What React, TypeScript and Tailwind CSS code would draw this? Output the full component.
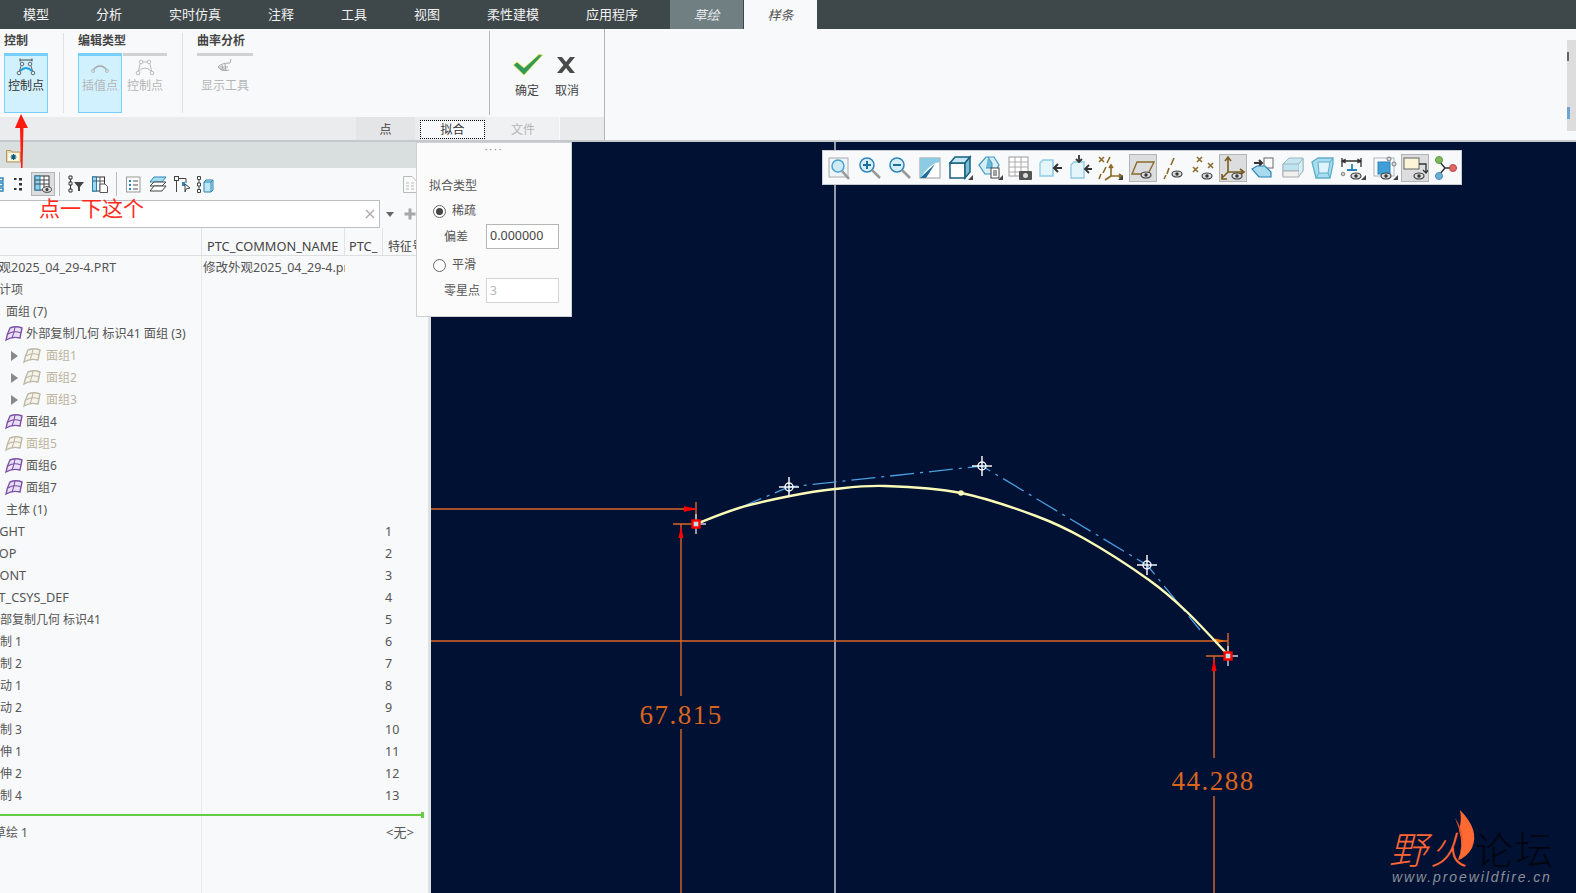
import React from "react";

const Eye = ({ x = 14, y = 19 }: { x?: number; y?: number }) => (
  <g>
    <ellipse cx={x} cy={y} rx={5} ry={3} fill="#d8d8d8" stroke="#444" strokeWidth={1.2} />
    <circle cx={x} cy={y} r={1.7} fill="#333" />
  </g>
);
const Corner = () => <path d="M27 26 L27 21 L22 26Z" fill="#444" />;
const T = ({ children }: { children: React.ReactNode }) => (
  <div className="w-[30px] h-[28px] flex items-center justify-center shrink-0">
    <svg width="28" height="28" viewBox="0 0 28 28" fill="none">{children}</svg>
  </div>
);

const Quilt = ({ faded }: { faded?: boolean }) => {
  const c = faded ? "#bdb8a6" : "#7d4fa8";
  return (
    <svg width="18" height="16" viewBox="0 0 18 16" fill="none" className="shrink-0">
      <path d="M5 2 Q11 -0.5 17 2 L15 12 Q7 10 1 14 Q2 8 5 2 Z" fill={faded ? "#f6f3e8" : "#e8e0f4"} stroke={c} strokeWidth="1.400" />
      <path d="M10 1 Q9 7 7 12 M3 8 Q9 4 16 7" stroke={c} strokeWidth="1.100" />
    </svg>
  );
};

const Arrow = () => <span className="w-0 h-0 border-y-[5px] border-y-transparent border-l-[7px] border-l-[#8a8a8a] shrink-0" />;

type Row = { text: string; off: string; num?: string; col2?: string; icon?: "q" | "f"; arrow?: boolean; faded?: boolean };
const rows: Row[] = [
  { text: "修改外观2025_04_29-4.PRT", off: "ml-[-39px] text-[12.5px]", col2: "修改外观2025_04_29-4.prt" },
  { text: "设计项", off: "ml-[-13px]" },
  { text: "面组 (7)", off: "ml-[6px]" },
  { text: "外部复制几何 标识41 面组 (3)", off: "ml-[5px] gap-[3px] text-[12.2px]", icon: "q" },
  { text: "面组1", off: "ml-[11px] gap-[5px]", icon: "f", arrow: true, faded: true },
  { text: "面组2", off: "ml-[11px] gap-[5px]", icon: "f", arrow: true, faded: true },
  { text: "面组3", off: "ml-[11px] gap-[5px]", icon: "f", arrow: true, faded: true },
  { text: "面组4", off: "ml-[5px] gap-[3px]", icon: "q" },
  { text: "面组5", off: "ml-[5px] gap-[3px]", icon: "f", faded: true },
  { text: "面组6", off: "ml-[5px] gap-[3px]", icon: "q" },
  { text: "面组7", off: "ml-[5px] gap-[3px]", icon: "q" },
  { text: "主体 (1)", off: "ml-[6px]" },
  { text: "RIGHT", off: "ml-[-13px] text-[12.7px]", num: "1" },
  { text: "TOP", off: "ml-[-8px] text-[12.7px]", num: "2" },
  { text: "FRONT", off: "ml-[-15px] text-[12.7px]", num: "3" },
  { text: "PRT_CSYS_DEF", off: "ml-[-17px] text-[12.7px]", num: "4" },
  { text: "外部复制几何 标识41", off: "ml-[-12px]", num: "5" },
  { text: "复制 1", off: "ml-[-12px]", num: "6" },
  { text: "复制 2", off: "ml-[-12px]", num: "7" },
  { text: "移动 1", off: "ml-[-12px]", num: "8" },
  { text: "移动 2", off: "ml-[-12px]", num: "9" },
  { text: "复制 3", off: "ml-[-12px]", num: "10" },
  { text: "拉伸 1", off: "ml-[-12px]", num: "11" },
  { text: "拉伸 2", off: "ml-[-12px]", num: "12" },
  { text: "复制 4", off: "ml-[-12px]", num: "13" },
];

const curvePts: [number, number][] = [
  [696, 524], [739, 508], [790, 496], [835, 489], [885, 486], [961, 493], [1036, 516], [1085, 539], [1149, 580], [1187, 612], [1229, 656],
];
function catmull(p: [number, number][]) {
  let d = `M${p[0][0]} ${p[0][1]}`;
  for (let i = 0; i < p.length - 1; i++) {
    const a = p[Math.max(i - 1, 0)], b = p[i], c = p[i + 1], e = p[Math.min(i + 2, p.length - 1)];
    d += ` C${b[0] + (c[0] - a[0]) / 6} ${b[1] + (c[1] - a[1]) / 6} ${c[0] - (e[0] - b[0]) / 6} ${c[1] - (e[1] - b[1]) / 6} ${c[0]} ${c[1]}`;
  }
  return d;
}

const Cross = ({ x, y }: { x: number; y: number }) => (
  <g stroke="#f2f4f8" strokeWidth="1.500" fill="none">
    <path d={`M${x - 10} ${y} H${x + 10} M${x} ${y - 10} V${y + 10}`} />
    <circle cx={x} cy={y} r={4} />
  </g>
);
const EndPt = ({ x, y }: { x: number; y: number }) => (
  <g>
    <path d={`M${x} ${y - 10} V${y + 10} M${x} ${y} H${x + 10}`} stroke="#cfd3d8" strokeWidth="1.400" />
    <rect x={x - 3.5} y={y - 3.5} width={7} height={7} fill="#bfe0e8" stroke="#ff0000" strokeWidth="2.400" />
  </g>
);

const tabs = ["模型", "分析", "实时仿真", "注释", "工具", "视图", "柔性建模", "应用程序"];
const RB = "text-[12px] leading-[16px]";

export default function App() {
  return (
    <div className="w-[1576px] h-[893px] overflow-hidden flex flex-col relative bg-[#f8f9fb] text-[#444] font-['Noto_Sans','Noto_Sans_CJK_SC',sans-serif] text-[13px]">
      {/* Top tabs */}
      <div className="h-[29px] bg-[#3e4749] flex items-stretch shrink-0 text-[#f2f2f2]">
        <div className="flex items-center gap-[47px] pl-[23px] leading-none">
          {tabs.map((t) => <span key={t}>{t}</span>)}
        </div>
        <div className="ml-[32px] w-[73px] bg-[#6f7f82] flex items-center justify-center italic text-[#e6e9e9] font-['Noto_Sans_CJK_SC',sans-serif]">草绘</div>
        <div className="ml-[1px] w-[73px] bg-[#f8f9fb] flex items-center justify-center italic text-[#555] font-['Noto_Sans_CJK_SC',sans-serif]">样条</div>
      </div>

      {/* Ribbon */}
      <div className="h-[113px] shrink-0 flex border-b-2 border-[#c6c9cb] bg-[#f8f9fb] relative">
        <div className="w-[605px] flex flex-col border-r border-[#b5b7b9] shrink-0">
          <div className="h-[88px] flex pt-[4px]">
            <div className="w-[64px] pl-[4px] border-r border-[#e0e1e3] h-[80px] shrink-0">
              <div className="text-[12px] font-bold leading-[16px] text-[#444]">控制</div>
              <div className="w-[44px] h-[60px] mt-[4px] bg-[#d2f1ff] border border-[#77cfff] border-t-[3px] flex flex-col items-center">
                <svg width="20" height="20" viewBox="0 0 20 20" fill="none" className="mt-[1px]">
                  <path d="M4 3 H16 M4 1.500 V4.500 M16 1.500 V4.500" stroke="#444" />
                  <circle cx="6" cy="7" r="1.800" stroke="#666" /><circle cx="14" cy="7" r="1.800" stroke="#666" />
                  <circle cx="3" cy="16" r="1.800" stroke="#666" /><circle cx="17" cy="16" r="1.800" stroke="#666" />
                  <path d="M4 14 Q10 8 16 14" stroke="#1ca0dd" strokeWidth="2" />
                  <path d="M5 9 L3.500 14 M15 9 L16.500 14" stroke="#666" />
                </svg>
                <span className={`${RB} text-[#333] mt-[1px]`}>控制点</span>
              </div>
            </div>
            <div className="w-[119px] pl-[14px] border-r border-[#e0e1e3] h-[80px] shrink-0">
              <div className="text-[12px] font-bold leading-[16px]">编辑类型</div>
              <div className="flex gap-[1px] mt-[4px]">
                <div className="w-[44px] h-[60px] bg-[#d2f1ff] border border-[#77cfff] border-t-[3px] flex flex-col items-center">
                  <svg width="20" height="20" viewBox="0 0 20 20" fill="none" className="mt-[1px]">
                    <path d="M3 13 Q10 5 17 13" stroke="#a8a8a8" strokeWidth="1.600" />
                    <circle cx="3" cy="14" r="1.500" stroke="#bbb" /><circle cx="17" cy="14" r="1.500" stroke="#bbb" />
                  </svg>
                  <span className={`${RB} text-[#b4b6b8] mt-[1px]`}>插值点</span>
                </div>
                <div className="w-[44px] h-[60px] border-t-[3px] border-[#d0d1d3] flex flex-col items-center">
                  <svg width="20" height="20" viewBox="0 0 20 20" fill="none" className="mt-[1px]">
                    <circle cx="6" cy="5" r="1.800" stroke="#bbb" /><circle cx="14" cy="5" r="1.800" stroke="#bbb" />
                    <circle cx="3" cy="16" r="1.800" stroke="#bbb" /><circle cx="17" cy="16" r="1.800" stroke="#bbb" />
                    <path d="M5 7 L3.500 14 M15 7 L16.500 14 M8 5 H12 M4 14 Q10 8 16 14" stroke="#bbb" />
                  </svg>
                  <span className={`${RB} text-[#b4b6b8] mt-[1px]`}>控制点</span>
                </div>
              </div>
            </div>
            <div className="w-[307px] pl-[14px] border-r border-[#b5b7b9] h-[84px] -mt-[2px] pt-[2px] shrink-0">
              <div className="text-[12px] font-bold leading-[16px]">曲率分析</div>
              <div className="w-[56px] h-[60px] mt-[4px] border-t-[3px] border-[#d0d1d3] flex flex-col items-center">
                <svg width="20" height="20" viewBox="0 0 20 20" fill="none" className="mt-[1px]">
                  <path d="M16 2 L15 6 Q6 6 3 10 Q6 15 14 13 M4 10 H13 M5 12 H11 M7 8 L8 14 M10 7 L11 14" stroke="#aaa" />
                </svg>
                <span className={`${RB} text-[#b4b6b8] mt-[1px]`}>显示工具</span>
              </div>
            </div>
            <div className="flex pl-[20px] pt-[21px] gap-[6px]">
              <div className="flex flex-col items-center w-[34px]">
                <svg width="30" height="22" viewBox="0 0 30 22" className="ml-[2px]">
                  <path d="M0.500 11 L4 8 L11 14 L26 0.500 L29.500 1 L11 21 Z" fill="#2f9a5b" stroke="#e2e23a" strokeWidth="0.800" />
                </svg>
                <span className={`${RB} mt-[7px] text-[#444]`}>确定</span>
              </div>
              <div className="flex flex-col items-center w-[34px]">
                <svg width="22" height="22" viewBox="0 0 22 22" className="-ml-[2px]">
                  <path d="M2 3 H7 L11 8 L15 3 H20 L13.500 11 L20 19 H15 L11 14 L7 19 H2 L8.500 11 Z" fill="#4a4a4a" />
                </svg>
                <span className={`${RB} mt-[7px] text-[#444]`}>取消</span>
              </div>
            </div>
          </div>
          <div className="h-[23px] flex bg-[#ebecee] items-stretch">
            <div className="w-[356px]" />
            <div className="w-[59px] bg-[#e4e5e7] flex items-center justify-center text-[12px] pt-[2px]">点</div>
            <div className="w-[5px]" />
            <div className="w-[65px] h-[19px] mt-[3px] bg-[#f8f9fb] border border-dotted border-black flex items-center justify-center text-[12px] text-[#333] pt-[1px]">拟合</div>
            <div className="w-[2px]" />
            <div className="w-[72px] bg-[#f0f1f3] flex items-center justify-center text-[12px] text-[#b4b6b8] pt-[2px]">文件</div>
            <div className="w-[1px] bg-[#fafafa]" />
            <div className="flex-1 bg-[#e9eaec]" />
          </div>
        </div>
        <div className="flex-1 flex justify-end items-start pt-[11px]">
          <div className="w-[9px] h-[91px] bg-[#dddddd] flex flex-col justify-between py-[12px] overflow-hidden">
            <span className="w-[2px] h-[9px] bg-[#666]" />
            <span className="w-[3px] h-[12px] bg-[#6fa3d2]" />
          </div>
        </div>
      </div>

      {/* Body */}
      <div className="flex-1 flex min-h-0">
        {/* Left panel */}
        <div className="w-[431px] shrink-0 flex flex-col border-r-[3px] border-[#dde0e1] overflow-hidden">
          <div className="h-[26px] bg-[#d9dfdf] flex items-center pl-[6px] shrink-0">
            <svg width="15" height="15" viewBox="0 0 15 15">
              <path d="M0.500 2.500 H5 L6 4 H14.500 V14 H0.500Z" fill="#eed9a6" stroke="#b0996a" />
              <rect x="2" y="5" width="11" height="8" fill="#fdf6e0" />
              <path d="M7.500 6 V12 M4.500 9 H10.500 M5.500 7 L9.500 11 M9.500 7 L5.500 11" stroke="#0e5c7e" strokeWidth="1.200" />
            </svg>
          </div>
          <div className="h-[32px] flex items-center shrink-0 relative">
            <svg width="4" height="18" viewBox="0 0 4 18" fill="none"><path d="M0 3 H3 V6 H0 M0 8 H3 V11 H0 M0 13 H3 V16 H0" stroke="#2a84b8" strokeWidth="1.400" /></svg>
            <svg width="9" height="18" viewBox="0 0 9 18" className="ml-[10px]"><path d="M5 3h3v2.500H5zM5 8h3v2.500H5zM5 13h3v2.500H5zM0 3h2.500v2H0zM0 13h2.500v2H0z" fill="#333" /></svg>
            <div className="ml-[8px] w-[24px] h-[24px] bg-[#dcdddf] border border-[#b4b4b4] flex items-center justify-center">
              <svg width="20" height="20" viewBox="0 0 20 20" fill="none">
                <rect x="2" y="2" width="14" height="14" fill="#fff" stroke="#333" />
                <rect x="2" y="2" width="5" height="14" fill="#8fd0ec" stroke="#1f7fb0" />
                <path d="M2 6 H16 M2 10 H16 M11 2 V14" stroke="#444" />
                <ellipse cx="14" cy="15.500" rx="4.500" ry="2.800" fill="#ddd" stroke="#444" /><circle cx="14" cy="15.500" r="1.500" fill="#333" />
              </svg>
            </div>
            <span className="ml-[4px] w-px h-[24px] bg-[#bcbcbc]" />
            <svg width="17" height="18" viewBox="0 0 17 18" fill="none" className="ml-[7px]">
              <path d="M2 1h3v3H2zM2 7h3v3H2zM2 14h3v3H2z" stroke="#333" /><path d="M3.500 4V7M3.500 10V14" stroke="#333" />
              <path d="M7 7 H17 L13 12 V16 H11 V12Z" fill="#444" />
            </svg>
            <svg width="16" height="17" viewBox="0 0 16 17" fill="none" className="ml-[8px]">
              <rect x="0.500" y="1" width="12" height="14" fill="#fff" stroke="#333" /><rect x="0.500" y="1" width="4" height="14" fill="#9fd5ee" stroke="#1f7fb0" />
              <path d="M1 5H12M8 1V15" stroke="#555" /><path d="M8 8 H13 L15.500 10.500 V16.500 H8Z" fill="#fff" stroke="#555" />
            </svg>
            <span className="ml-[8px] w-px h-[24px] bg-[#bcbcbc]" />
            <svg width="15" height="17" viewBox="0 0 15 17" fill="none" className="ml-[9px]">
              <rect x="0.500" y="1" width="13.500" height="15" fill="#fafafa" stroke="#999" />
              <path d="M3 4h2v2H3zM3 8h2v2H3zM3 12h2v2H3z" fill="#2a84b8" /><path d="M7 5H12M7 9H12M7 13H12" stroke="#555" />
            </svg>
            <svg width="18" height="16" viewBox="0 0 18 16" fill="none" className="ml-[8px]">
              <path d="M5 1 H17 L13 6 H1Z" fill="#a8dcef" stroke="#2a84b8" /><path d="M5 6 H17 L13 10 H1Z" fill="#fff" stroke="#444" /><path d="M5 10 H17 L13 15 H1Z" fill="#fff" stroke="#444" />
            </svg>
            <svg width="17" height="17" viewBox="0 0 17 17" fill="none" className="ml-[7px]">
              <rect x="0.500" y="0.500" width="4" height="4" stroke="#444" /><path d="M2.500 4.500V16" stroke="#444" /><path d="M4.500 2.500H12V7" stroke="#444" />
              <path d="M8 6 H11 V10 H8Z" fill="#2a84b8" /><path d="M11 8 L16 12 L12 13 L11 16Z" fill="#fff" stroke="#444" />
            </svg>
            <svg width="17" height="17" viewBox="0 0 17 17" fill="none" className="ml-[6px]">
              <path d="M0.500 0.500h3v3h-3zM0.500 7h3v3h-3zM0.500 13.500h3v3h-3z" stroke="#444" /><path d="M2 3.500V7M2 10V13.500" stroke="#444" />
              <path d="M7 6 L9 4 H16 V14 L14 16 H7Z" fill="#bfe6f5" stroke="#2a84b8" /><path d="M7 6H14V16M14 6L16 4" stroke="#2a84b8" />
            </svg>
            <svg width="14" height="17" viewBox="0 0 14 17" fill="none" className="ml-auto mr-[11px]">
              <path d="M0.500 0.500 H9 L13.500 5 V16.500 H0.500Z" fill="#fafafa" stroke="#bbb" /><path d="M3 7H6M8 7H11M3 10H6M8 10H11M3 13H6M8 13H11" stroke="#bbb" />
            </svg>
          </div>
          <div className="h-[28px] flex items-center shrink-0">
            <div className="w-[380px] h-[28px] bg-white border border-l-0 border-[#bcbfc2] flex items-center justify-end pr-[4px] text-[#b5b5b5] shrink-0">
              <svg width="10" height="10" viewBox="0 0 10 10"><path d="M1 1L9 9M9 1L1 9" stroke="#aaa" strokeWidth="1.400" /></svg>
            </div>
            <span className="ml-[6px] w-0 h-0 border-x-[4px] border-x-transparent border-t-[5px] border-t-[#666]" />
            <svg width="12" height="12" viewBox="0 0 12 12" className="ml-[10px]"><path d="M6 0.500V11.500M0.500 6H11.500" stroke="#a6a6a6" strokeWidth="3" /></svg>
          </div>
          <div className="h-[28px] shrink-0 grid grid-cols-[202px_143px_38px_1fr] border-b border-[#dcdedf] items-stretch text-[12.8px] text-[#444]">
            <div className="border-r border-[#e1e3e5]" />
            <div className="border-r border-[#e1e3e5] pl-[5px] flex items-center overflow-hidden whitespace-nowrap pt-[10px]">PTC_COMMON_NAME</div>
            <div className="border-r border-[#e1e3e5] pl-[4px] flex items-center overflow-hidden whitespace-nowrap pt-[10px]">PTC_</div>
            <div className="pl-[5px] flex items-center overflow-hidden whitespace-nowrap pt-[10px] text-[12px]">特征号</div>
          </div>
          <div className="flex-1 min-h-0 flex flex-col text-[#555] text-[12px]">
            {rows.map((r) => (
              <div key={r.text + r.off + (r.num || "")} className="h-[22px] shrink-0 grid grid-cols-[202px_143px_38px_1fr]">
                <div className="border-r border-[#e8eaec] overflow-hidden">
                  <div className={`flex items-center h-full pt-[2px] whitespace-nowrap ${r.off} ${r.faded ? "text-[#bdb49c]" : ""}`}>
                    {r.arrow && <Arrow />}
                    {r.icon && <Quilt faded={r.icon === "f"} />}
                    <span>{r.text}</span>
                  </div>
                </div>
                <div className="flex items-center overflow-hidden whitespace-nowrap pr-[2px] pt-[2px] text-[12.5px] text-[#555]">{r.col2 && <span className="ml-[1px]">{r.col2}</span>}</div>
                <div />
                <div className="flex items-center pl-[2px] pt-[2px] text-[12.5px]">{r.num}</div>
              </div>
            ))}
            <div className="h-[8px] shrink-0 grid grid-cols-[202px_1fr]"><div className="border-r border-[#e8eaec]" /></div>
            <div className="h-[2px] bg-[#66cc44] shrink-0 relative mr-[6px]">
              <span className="absolute right-[-2px] top-[-2px] w-[3px] h-[6px] bg-[#66cc44]" />
            </div>
            <div className="h-[7px] shrink-0 grid grid-cols-[202px_1fr]"><div className="border-r border-[#e8eaec]" /></div>
            <div className="h-[20px] shrink-0 grid grid-cols-[202px_181px_1fr]">
              <div className="border-r border-[#e8eaec] overflow-hidden flex items-center whitespace-nowrap"><span className="ml-[-6px]">草绘 1</span></div>
              <div />
              <div className="flex items-center pl-[3px] text-[13px]">&lt;无&gt;</div>
            </div>
            <div className="flex-1 grid grid-cols-[202px_1fr]"><div className="border-r border-[#e8eaec]" /></div>
          </div>
        </div>

        {/* Canvas */}
        <div className="flex-1 bg-[#001133] relative overflow-hidden">
          <svg width="1145" height="751" viewBox="431 142 1145 751" fill="none" className="block">
            <path d="M835 142V893" stroke="#c5c9d0" strokeWidth="1.500" />
            <g stroke="#d9652a" strokeWidth="1.400">
              <path d="M431 509H696M696 502V527M673 524H693M681 524V696M681 729V893" />
              <path d="M431 641H1228M1228 633V652M1206 656H1226M1214 656V758M1214 796V893" />
            </g>
            <path d="M696 509 L684 506.500 V511.500Z" fill="#ff0000" stroke="#ff0000" strokeWidth="0.600" />
            <path d="M681 526 L683.500 538 H678.500Z" fill="#ff0000" />
            <path d="M1226 641 L1215 638.500 V643.500Z" fill="#f07010" />
            <path d="M1214 658 L1216.500 671 H1211.500Z" fill="#ff0000" />
            <path d="M739 508 L789 487 L982 466 L1147 565 L1200 630" stroke="#4a9fe0" strokeWidth="1.300" strokeDasharray="24 6 3 6" />
            <path d={catmull(curvePts)} stroke="#fbfbb8" strokeWidth="2.400" />
            <circle cx="961" cy="493" r="2.800" fill="#fbfbb8" />
            <Cross x={789} y={487} />
            <Cross x={982} y={466} />
            <Cross x={1147} y={565} />
            <EndPt x={696} y={524} />
            <EndPt x={1228} y={656} />
            <text x="681" y="724" textAnchor="middle" fill="#d9651f" fontSize="27" letterSpacing="1.500" fontFamily="'Liberation Serif', serif">67.815</text>
            <text x="1213" y="790" textAnchor="middle" fill="#d9651f" fontSize="27" letterSpacing="1.500" fontFamily="'Liberation Serif', serif">44.288</text>
            <path d="M1460 810 Q1480 830 1472 848 Q1466 858 1458 860 Q1464 846 1459 830 Q1462 820 1460 810Z" fill="#ff6a33" />
            <path d="M1455 818 Q1463 828 1463 845 Q1460 830 1455 818Z" fill="#e0532a" />
          </svg>

          {/* Watermark */}
          <div className="absolute left-[958px] top-[687px] flex items-end leading-none">
            <span className="text-[38px] w-[41px] italic text-[#ff6633] font-light font-['Noto_Sans_CJK_SC',sans-serif]">野</span>
            <span className="text-[38px] w-[42px] italic text-[#ff6633] font-light font-['Noto_Sans_CJK_SC',sans-serif]">火</span>
            <span className="text-[38px] w-[40px] ml-[3px] text-[#00050f] font-light font-['Noto_Sans_CJK_SC',sans-serif]">论</span>
            <span className="text-[38px] text-[#00050f] font-light font-['Noto_Sans_CJK_SC',sans-serif]">坛</span>
          </div>
          <div className="absolute left-[961px] top-[728px] text-[14px] leading-none italic tracking-[1.900px] text-[#8a8f99] font-['Liberation_Sans',sans-serif] whitespace-nowrap">www.proewildfire.cn</div>

          {/* Floating toolbar */}
          <div className="absolute left-[391px] top-[8px] w-[640px] h-[35px] bg-[#f8f9fb] border border-[#c9ccd0] flex items-center pl-[2px]">
            <T><rect x="3" y="4" width="19" height="19" fill="#eef5f8" stroke="#aaa" /><circle cx="12" cy="12" r="6" fill="#cfeaf6" stroke="#4aa3cf" strokeWidth="1.500" /><path d="M16 17L23 25" stroke="#999" strokeWidth="2.500" /></T>
            <T><circle cx="11" cy="11" r="7" fill="#d7eef8" stroke="#2a84b8" strokeWidth="1.500" /><path d="M7 11H15M11 7V15" stroke="#1d6f9c" strokeWidth="2" /><path d="M16 16L24 24" stroke="#999" strokeWidth="2.500" /></T>
            <T><circle cx="11" cy="11" r="7" fill="#d7eef8" stroke="#2a84b8" strokeWidth="1.500" /><path d="M7 11H15" stroke="#1d6f9c" strokeWidth="2" /><path d="M16 16L24 24" stroke="#999" strokeWidth="2.500" /></T>
            <T><rect x="4" y="4" width="20" height="20" fill="#fff" stroke="#999" /><path d="M4 4H24V8Q14 9 5 23H4Z" fill="#8ccbe2" /><path d="M4 24L19 10L10 24Z" fill="#1d6f9c" /></T>
            <T><path d="M4 9H19V24H4Z" fill="#fff" stroke="#17607f" strokeWidth="1.500" /><path d="M4 9L9 3H24L19 9Z" fill="#c5e7f3" stroke="#17607f" strokeWidth="1.500" /><path d="M19 9L24 3V18L19 24Z" fill="#7dbcd6" stroke="#17607f" strokeWidth="1.500" /><Corner /></T>
            <T><path d="M3 11L10 3H18L23 11L18 20H9Z" fill="#d5eef7" stroke="#3f97bd" strokeWidth="1.200" /><path d="M12 3L16 9V14H10" fill="#6cb8d8" stroke="#3f97bd" /><rect x="15" y="14" width="8" height="10" fill="#fff" stroke="#444" /><path d="M17 17H21M17 19H21M17 21H21" stroke="#444" /><Corner /></T>
            <T><rect x="3" y="3" width="19" height="19" fill="#fff" stroke="#999" /><path d="M3 8H22M3 13H22M3 18H22M9 3V22M15 3V22" stroke="#aaa" /><rect x="13" y="17" width="13" height="9" rx="1" fill="#555" /><circle cx="19.500" cy="21.500" r="2.500" fill="#ddd" /></T>
            <T><path d="M4 9L7 6H17V22H4Z" fill="#e4f5fc" stroke="#8ccbe2" strokeWidth="1.300" /><path d="M17 6V22" stroke="#8ccbe2" /><path d="M18 14H26M22 10L18 14L22 18" stroke="#333" strokeWidth="2" /></T>
            <T><path d="M5 11L8 8H18V24H5Z" fill="#e4f5fc" stroke="#8ccbe2" strokeWidth="1.300" /><path d="M13 1V7M10 5L13 8L16 5" stroke="#333" strokeWidth="1.800" /><path d="M19 15H26M23 11L19 15L23 19" stroke="#333" strokeWidth="1.800" /></T>
            <T><path d="M3 3L8 8M8 3L3 8M14 3L11 9M10 13L7 19M5 20L3 25" stroke="#8a6a28" strokeWidth="1.600" /><path d="M15 12V22H25M15 22L9 26M13 14L15 11L17 14M23 20L26 22L23 24" stroke="#8a6a28" strokeWidth="1.600" /><Corner /></T>
            <div className="w-[28px] h-[28px] ml-[4px] mr-[1px] bg-[#dcdddf] border border-[#b4b4b4] flex items-center justify-center shrink-0">
              <svg width="26" height="26" viewBox="0 0 26 26" fill="none"><path d="M7 7H24L18 19H2Z" stroke="#8a6a28" strokeWidth="1.400" /><Eye x={16} y={20} /></svg>
            </div>
            <T><path d="M15 4L12 11M10 14L8 20" stroke="#8a6a28" strokeWidth="1.600" /><path d="M7 21L5 25" stroke="#8a6a28" strokeWidth="1.600" /><Eye x={18} y={20} /></T>
            <T><path d="M8 3L13 8M13 3L8 8M19 9L24 14M24 9L19 14M4 13L9 18M9 13L4 18" stroke="#8a6a28" strokeWidth="1.500" /><Eye x={18} y={22} /></T>
            <div className="w-[28px] h-[28px] mx-[1px] bg-[#dcdddf] border border-[#b4b4b4] flex items-center justify-center shrink-0">
              <svg width="26" height="26" viewBox="0 0 26 26" fill="none"><path d="M8 3V17H23M8 17L2 23M5 6L8 2L11 6M20 14L24 17L20 20M2 19V24H7" stroke="#7a5c1f" strokeWidth="1.600" /><Eye x={17} y={21} /></svg>
            </div>
            <T><rect x="15" y="4" width="9" height="10" fill="#fff" stroke="#666" /><path d="M5 9H13M10 6L13 9L10 12" stroke="#333" strokeWidth="2" /><path d="M3 15L8 12H16L22 18V23H10Z" fill="#a9dbee" stroke="#2a84b8" strokeWidth="1.200" /></T>
            <T><path d="M4 10L10 4H24V17L20 22H4Z" fill="#c6e7f2" stroke="#9fb7c0" /><path d="M4 10H20V17H4Z" fill="#bfe4f1" stroke="#9fb7c0" /><path d="M4 17H20V23H4Z" fill="#f0f0f0" stroke="#aaa" /><path d="M20 10L24 4V17L20 22" fill="#d9eff7" stroke="#9fb7c0" /></T>
            <T><path d="M3 8L9 4H24V10L21 24H7Z" fill="#a8dcef" stroke="#60aecb" strokeWidth="1.300" /><path d="M9 8H21L19 19H10Z" fill="#dff3fa" stroke="#60aecb" /><path d="M21 8L24 4M10 19L7 24M19 19L21 24" stroke="#60aecb" /></T>
            <T><path d="M3 4V13M22 4V13M3 7H22M3 7L6 5.500V8.500ZM22 7L19 5.500V8.500Z" stroke="#333" strokeWidth="1.300" /><path d="M8 16H18M13 16V10" stroke="#2a84b8" strokeWidth="1.800" /><circle cx="4" cy="20" r="1.800" fill="#ccc" stroke="#888" /><Eye x={17} y={22} /><Corner /></T>
            <div className="w-[30px] h-[28px] ml-[2px] flex items-center justify-center shrink-0">
              <svg width="28" height="28" viewBox="0 0 28 28" fill="none"><rect x="3" y="4" width="20" height="18" stroke="#a8b8c0" /><rect x="7" y="8" width="12" height="12" fill="#3f9fd6" stroke="#2a84b8" /><circle cx="18" cy="5" r="2" fill="#e0e0e0" stroke="#777" /><circle cx="23" cy="10" r="2" fill="#e0e0e0" stroke="#777" /><Eye x={15} y={22} /><Corner /></svg>
            </div>
            <div className="w-[28px] h-[28px] mx-[1px] bg-[#dcdddf] border border-[#b4b4b4] flex items-center justify-center shrink-0">
              <svg width="26" height="26" viewBox="0 0 26 26" fill="none"><rect x="2" y="3" width="15" height="11" fill="#fcf4d8" stroke="#666" /><path d="M17 9H24V17M21 15L24 18L26 15" stroke="#333" strokeWidth="1.300" /><Eye x={17} y={21} /></svg>
            </div>
            <T><path d="M8 7L14 14L8 21M14 14H21" stroke="#333" strokeWidth="1.500" /><circle cx="8" cy="6" r="3.500" fill="#7fb95f" stroke="#5d9a40" /><circle cx="22" cy="14" r="3.500" fill="#e0686a" stroke="#b84547" /><circle cx="8" cy="22" r="3.500" fill="#6eaed6" stroke="#4a8fb8" /></T>
          </div>
        </div>
      </div>

      {/* Popup panel over panel and canvas */}
      <div className="absolute left-[416px] top-[142px] w-[156px] h-[175px] bg-[#fbfbfb] border border-[#cdd0d2] text-[12px] text-[#555] flex flex-col">
        <div className="text-center tracking-[2px] leading-none h-[8px] text-[#888] text-[10px] mt-[1px]">····</div>
        <div className="ml-[12px] mt-[26px] leading-[16px]">拟合类型</div>
        <div className="flex items-center ml-[16px] mt-[9px] h-[16px]">
          <span className="w-[13px] h-[13px] rounded-full border border-[#666] bg-white flex items-center justify-center"><span className="w-[7px] h-[7px] rounded-full bg-[#444]" /></span>
          <span className="ml-[6px]">稀疏</span>
        </div>
        <div className="flex items-center ml-[27px] mt-[5px] h-[25px]">
          <span className="w-[42px]">偏差</span>
          <div className="w-[73px] h-[25px] bg-white border border-[#b4b6b8] flex items-center pl-[3px] text-[#444] text-[12.500px]">0.000000</div>
        </div>
        <div className="flex items-center ml-[16px] mt-[8px] h-[16px]">
          <span className="w-[13px] h-[13px] rounded-full border border-[#666] bg-white" />
          <span className="ml-[6px]">平滑</span>
        </div>
        <div className="flex items-center ml-[27px] mt-[5px] h-[25px]">
          <span className="w-[42px]">零星点</span>
          <div className="w-[73px] h-[25px] bg-white border border-[#d4d5d7] flex items-center pl-[3px] text-[#b5b5b5]">3</div>
        </div>
      </div>

      {/* Annotation */}
      <svg width="16" height="56" viewBox="0 0 16 56" className="absolute left-[14px] top-[114px]">
        <path d="M7 0 L14 14 H9.500 L8.500 54 H7 L6 14 H1Z" fill="#ff1a10" />
      </svg>
      <div className="absolute left-[39px] top-[194px] text-[21px] leading-[26px] text-[#ff2a1a] font-['Noto_Sans_CJK_SC',sans-serif]">点一下这个</div>
    </div>
  );
}
